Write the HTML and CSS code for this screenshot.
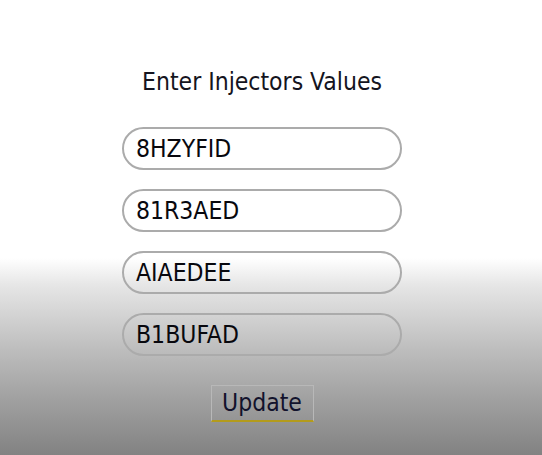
FILE: index.html
```html
<!DOCTYPE html>
<html>
<head>
<meta charset="utf-8">
<link rel="stylesheet" href="styles.css">
</head>
<body>
<div class="panel">
  <h1 class="title">Enter Injectors Values</h1>
  <div class="fields">
    <div class="field">8HZYFID</div>
    <div class="field">81R3AED</div>
    <div class="field">AIAEDEE</div>
    <div class="field">B1BUFAD</div>
  </div>
  <button class="update">Update</button>
</div>
</body>
</html>
```
FILE: styles.css
```css
html, body {
  margin: 0;
  height: 100%;
}
body {
  width: 542px;
  height: 455px;
  overflow: hidden;
  background: linear-gradient(to bottom, #ffffff 0px, #ffffff 258px, #e6e6e6 285px, #bdbdbd 350px, #a0a0a0 400px, #828282 455px);
  font-family: "DejaVu Sans Condensed", "DejaVu Sans", Tahoma, sans-serif;
  color: #0c0c16;
}
.panel {
  display: flex;
  flex-direction: column;
  align-items: center;
  padding-top: 68px;
  padding-right: 18px;
}
.title {
  margin: 0;
  font-size: 24.5px;
  font-weight: normal;
  line-height: 28px;
  color: #141420;
}
.fields {
  display: flex;
  flex-direction: column;
  gap: 19px;
  margin-top: 31px;
}
.field {
  box-sizing: border-box;
  width: 280px;
  height: 43px;
  border: 2px solid #ababab;
  border-radius: 22px;
  padding-left: 12px;
  display: flex;
  align-items: center;
  font-size: 24.5px;
  color: #08080e;
}
.update {
  margin-top: 29px;
  box-sizing: border-box;
  width: 103px;
  height: 37px;
  border: 1px solid #b8b8b8;
  border-bottom: 2px solid #b39b1c;
  background: transparent;
  font-family: inherit;
  font-size: 24.5px;
  color: #12122c;
  padding: 0;
  line-height: 30px;
}
```
